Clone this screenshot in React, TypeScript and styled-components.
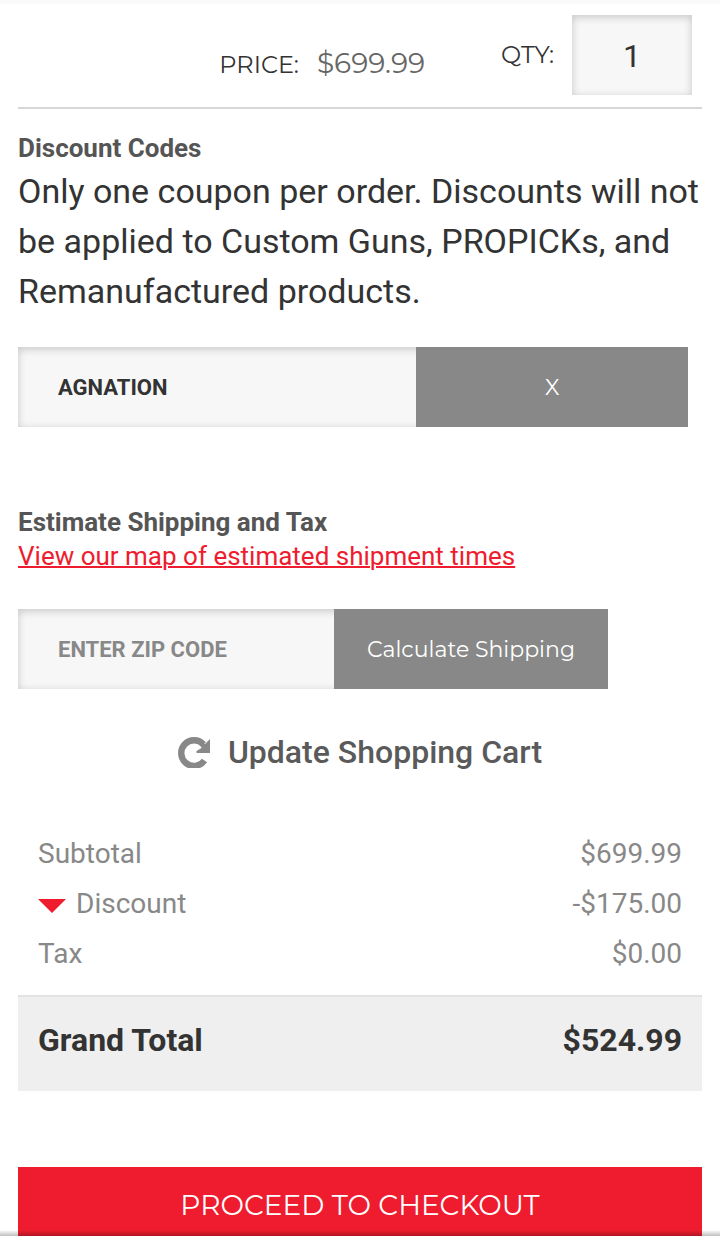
import React, { useState } from "react";
import styled, { createGlobalStyle } from "styled-components";

const display = `Montserrat, Inter, "Open Sans", sans-serif`;

const GlobalStyle = createGlobalStyle`
  * { box-sizing: border-box; }
  body {
    margin: 0;
    background: #fff;
    color: #333;
    font-family: Roboto, "Liberation Sans", sans-serif;
  }
`;

const Page = styled.main`
  border-top: 4px solid #fafafa;
  padding: 0 18px;
`;

const ItemRow = styled.section`
  display: flex;
  justify-content: flex-end;
  align-items: flex-start;
  padding: 11px 10px 12px 0;
  border-bottom: 2px solid #d7d7d7;
`;

const Price = styled.div`
  display: flex;
  align-items: baseline;
  gap: 18px;
  margin-right: 76px;
  padding-top: 28px;
  font: 400 24px/40px ${display};
`;

const Amount = styled.span`
  font-size: 28px;
  color: #666;
`;

const Quantity = styled.label`
  display: flex;
  align-items: center;
  gap: 18px;
  font: 400 24px/40px ${display};
`;

const Field = styled.input`
  min-width: 0;
  height: 80px;
  border: 0;
  border-radius: 0;
  outline: 0;
  background: #f7f7f7;
  box-shadow: inset 0 2px 8px rgba(0, 0, 0, 0.2);
  color: #333;
`;

const QuantityField = styled(Field)`
  width: 120px;
  padding: 2px 0 0;
  text-align: center;
  font: 400 32px Roboto, sans-serif;
`;

const CodeField = styled(Field)`
  flex: 1;
  margin-right: -10px;
  padding: 0 40px;
  font: 700 22px Roboto, sans-serif;
  &::placeholder {
    color: #888;
    opacity: 1;
  }
`;

const Block = styled.form<{ $top: number }>`
  padding-top: ${(p) => p.$top}px;
`;

const Heading = styled.h2`
  margin: 0;
  font-size: 26px;
  line-height: 34px;
  font-weight: 700;
  color: #555;
`;

const Note = styled.p`
  margin: 1px 0 0;
  font-size: 34px;
  line-height: 50px;
`;

const MapLink = styled.a`
  display: block;
  font-size: 26px;
  line-height: 34px;
  color: #ee1c2e;
  text-decoration-thickness: 2px;
`;

const FieldRow = styled.div<{ $width: string }>`
  display: flex;
  width: ${(p) => p.$width};
  margin-top: ${(p) => (p.$width === "98%" ? 31 : 36)}px;
`;

const GreyButton = styled.button<{ $basis: number }>`
  position: relative;
  flex: 0 0 ${(p) => p.$basis}px;
  height: 80px;
  padding: 0;
  border: 0;
  background: #888;
  color: #fff;
  font: 400 22px ${display};
`;

const UpdateButton = styled.button`
  display: flex;
  align-items: center;
  gap: 18px;
  margin: 43px auto 0;
  padding: 0;
  border: 0;
  background: none;
  color: #5a5a5a;
  font: 500 32px/40px Roboto, sans-serif;
`;

const Totals = styled.table`
  width: 100%;
  margin-top: 57px;
  border-collapse: separate;
  border-spacing: 0;
  color: #888;
  font-size: 28px;
  line-height: 50px;

  th, td {
    padding: 0 20px;
    font-weight: 400;
    text-align: left;
  }
  td { text-align: right; }
  tbody tr:last-child > * { padding-bottom: 16px; }
`;

const GrandTotal = styled.tr`
  background: #efefef;
  color: #333;
  font-size: 32px;

  && > * {
    padding: 18px 20px 26px;
    border-top: 2px solid #e3e3e3;
    font-weight: 700;
  }
`;

const DiscountArrow = styled.svg`
  margin-right: 10px;
  vertical-align: baseline;
`;

const Checkout = styled.button`
  display: block;
  width: 100%;
  margin-top: 76px;
  padding: 20px 0 13px;
  border: 0;
  background: #ee1c2e;
  color: #fff;
  font: 400 28px/36px ${display};
`;

const BottomShade = styled.div`
  position: fixed;
  inset: auto 0 0;
  height: 6px;
  pointer-events: none;
  background: linear-gradient(transparent, rgba(0, 0, 0, 0.25));
`;

export default function App() {
  const [quantity, setQuantity] = useState("1");
  const [coupon, setCoupon] = useState("AGNATION");
  const [zip, setZip] = useState("");

  return (
    <>
      <GlobalStyle />
      <Page>
        <ItemRow>
          <Price>
            <span>PRICE:</span>
            <Amount>$699.99</Amount>
          </Price>
          <Quantity>
            QTY:
            <QuantityField value={quantity} onChange={(e) => setQuantity(e.target.value)} />
          </Quantity>
        </ItemRow>

        <Block $top={22} onSubmit={(e) => e.preventDefault()}>
          <Heading>Discount Codes</Heading>
          <Note>
            Only one coupon per order. Discounts will not be applied to Custom Guns, PROPICKs, and
            Remanufactured products.
          </Note>
          <FieldRow $width="98%">
            <CodeField aria-label="Discount code" value={coupon} onChange={(e) => setCoupon(e.target.value)} />
            <GreyButton $basis={272} type="button" onClick={() => setCoupon("")}>X</GreyButton>
          </FieldRow>
        </Block>

        <Block $top={78} onSubmit={(e) => e.preventDefault()}>
          <Heading>Estimate Shipping and Tax</Heading>
          <MapLink href="#map">View our map of estimated shipment times</MapLink>
          <FieldRow $width="590px">
            <CodeField
              aria-label="Zip code"
              placeholder="ENTER ZIP CODE"
              value={zip}
              onChange={(e) => setZip(e.target.value)}
            />
            <GreyButton $basis={274} type="submit">Calculate Shipping</GreyButton>
          </FieldRow>
        </Block>

        <UpdateButton type="button">
          <svg width="32" height="32" viewBox="0 0 32 32" aria-hidden="true">
            <path d="M26.5 24.5A12.8 12.8 0 1 1 25.5 8.500" fill="none" stroke="#888" strokeWidth="6.4" />
            <path d="M32 3V17H18.500V15L23.500 12L22 7L27 8Z" fill="#888" />
          </svg>
          Update Shopping Cart
        </UpdateButton>

        <Totals>
          <tbody>
            <tr>
              <th scope="row">Subtotal</th>
              <td>$699.99</td>
            </tr>
            <tr>
              <th scope="row">
                <DiscountArrow width="28" height="14" viewBox="0 0 28 14" aria-hidden="true">
                  <path d="M0 0H28L14 14Z" fill="#ee1c2e" />
                </DiscountArrow>
                Discount
              </th>
              <td>-$175.00</td>
            </tr>
            <tr>
              <th scope="row">Tax</th>
              <td>$0.00</td>
            </tr>
          </tbody>
          <tfoot>
            <GrandTotal>
              <th scope="row">Grand Total</th>
              <td>$524.99</td>
            </GrandTotal>
          </tfoot>
        </Totals>

        <Checkout type="button">PROCEED TO CHECKOUT</Checkout>
      </Page>
      <BottomShade />
    </>
  );
}
